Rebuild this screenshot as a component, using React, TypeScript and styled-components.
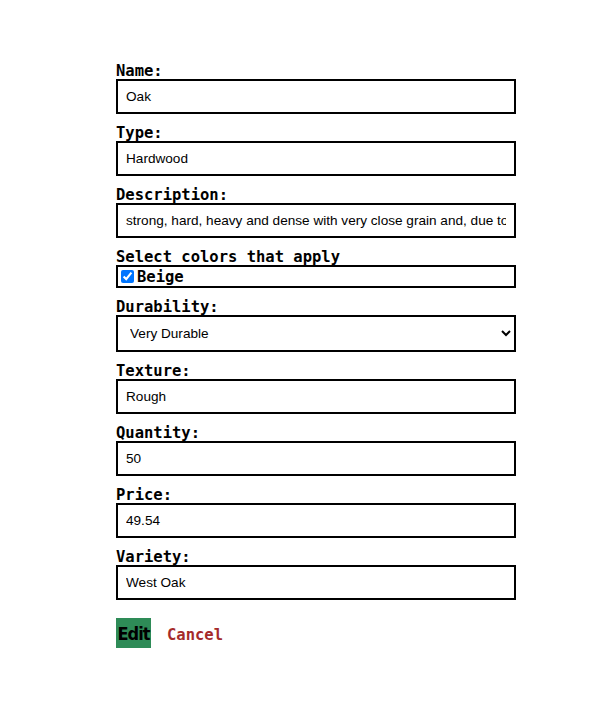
import React from "react";
import styled, { createGlobalStyle } from "styled-components";

const Global = createGlobalStyle`
  html, body { margin: 0; padding: 0; background: #fff; }
  body { font-family: "Liberation Sans", Arial, sans-serif; }
`;

const Form = styled.form`
  width: 400px;
  margin-left: 116px;
  padding-top: 60px;
  display: flex;
  flex-direction: column;
`;

const Field = styled.div`
  display: flex;
  flex-direction: column;
  margin-bottom: 8px;
`;

const Label = styled.label`
  font-family: "DejaVu Sans Mono", monospace;
  font-weight: bold;
  font-size: 15.5px;
  line-height: 16px;
  padding-top: 3px;
  color: #000;
`;

const Input = styled.input`
  box-sizing: border-box;
  width: 400px;
  height: 35px;
  border: 2px solid #000;
  padding: 0 8px;
  font-family: "Liberation Sans", Arial, sans-serif;
  font-size: 13.6px;
  color: #000;
  background: #fff;
  outline: none;
`;

const Select = styled.select`
  box-sizing: border-box;
  width: 400px;
  height: 37px;
  border: 2px solid #000;
  border-radius: 0;
  padding: 0 8px;
  font-family: "Liberation Sans", Arial, sans-serif;
  font-size: 13.6px;
  color: #000;
  background: #fff;
`;

const CheckBox = styled.div`
  box-sizing: border-box;
  width: 400px;
  height: 23px;
  border: 2px solid #000;
  display: flex;
  align-items: center;
`;

const Check = styled.input`
  margin: 0 3px 0 3px;
  width: 13px;
  height: 13px;
`;

const CheckLabel = styled.label`
  font-family: "DejaVu Sans Mono", monospace;
  font-weight: bold;
  font-size: 15.5px;
  line-height: 19px;
  padding-top: 1px;
`;

const Actions = styled.div`
  display: flex;
  align-items: center;
  margin-top: 10px;
  gap: 16px;
`;

const EditButton = styled.button`
  width: 35px;
  height: 30px;
  border: none;
  padding: 0;
  background: #2e8b57;
  color: #000;
  font-family: "DejaVu Sans Condensed", "DejaVu Sans", sans-serif;
  font-stretch: condensed;
  font-weight: bold;
  font-size: 18px;
  letter-spacing: -1px;
`;

const CancelLink = styled.a`
  font-family: "DejaVu Sans Mono", monospace;
  font-weight: bold;
  font-size: 15.5px;
  padding-top: 3px;
  color: #a52a2a;
  text-decoration: none;
`;

export default function App() {
  const text = (label: string, value: string) => (
    <Field>
      <Label>{label}</Label>
      <Input type="text" defaultValue={value} />
    </Field>
  );
  return (
    <>
      <Global />
      <Form onSubmit={(e) => e.preventDefault()}>
        {text("Name:", "Oak")}
        {text("Type:", "Hardwood")}
        {text(
          "Description:",
          "strong, hard, heavy and dense with very close grain and, due to its high tannin content, very resistant"
        )}
        <Field>
          <Label>Select colors that apply</Label>
          <CheckBox>
            <Check type="checkbox" id="beige" defaultChecked />
            <CheckLabel htmlFor="beige">Beige</CheckLabel>
          </CheckBox>
        </Field>
        <Field>
          <Label>Durability:</Label>
          <Select defaultValue="Very Durable">
            <option>Very Durable</option>
            <option>Durable</option>
            <option>Not Durable</option>
          </Select>
        </Field>
        {text("Texture:", "Rough")}
        {text("Quantity:", "50")}
        {text("Price:", "49.54")}
        {text("Variety:", "West Oak")}
        <Actions>
          <EditButton type="submit">Edit</EditButton>
          <CancelLink href="#">Cancel</CancelLink>
        </Actions>
      </Form>
    </>
  );
}
